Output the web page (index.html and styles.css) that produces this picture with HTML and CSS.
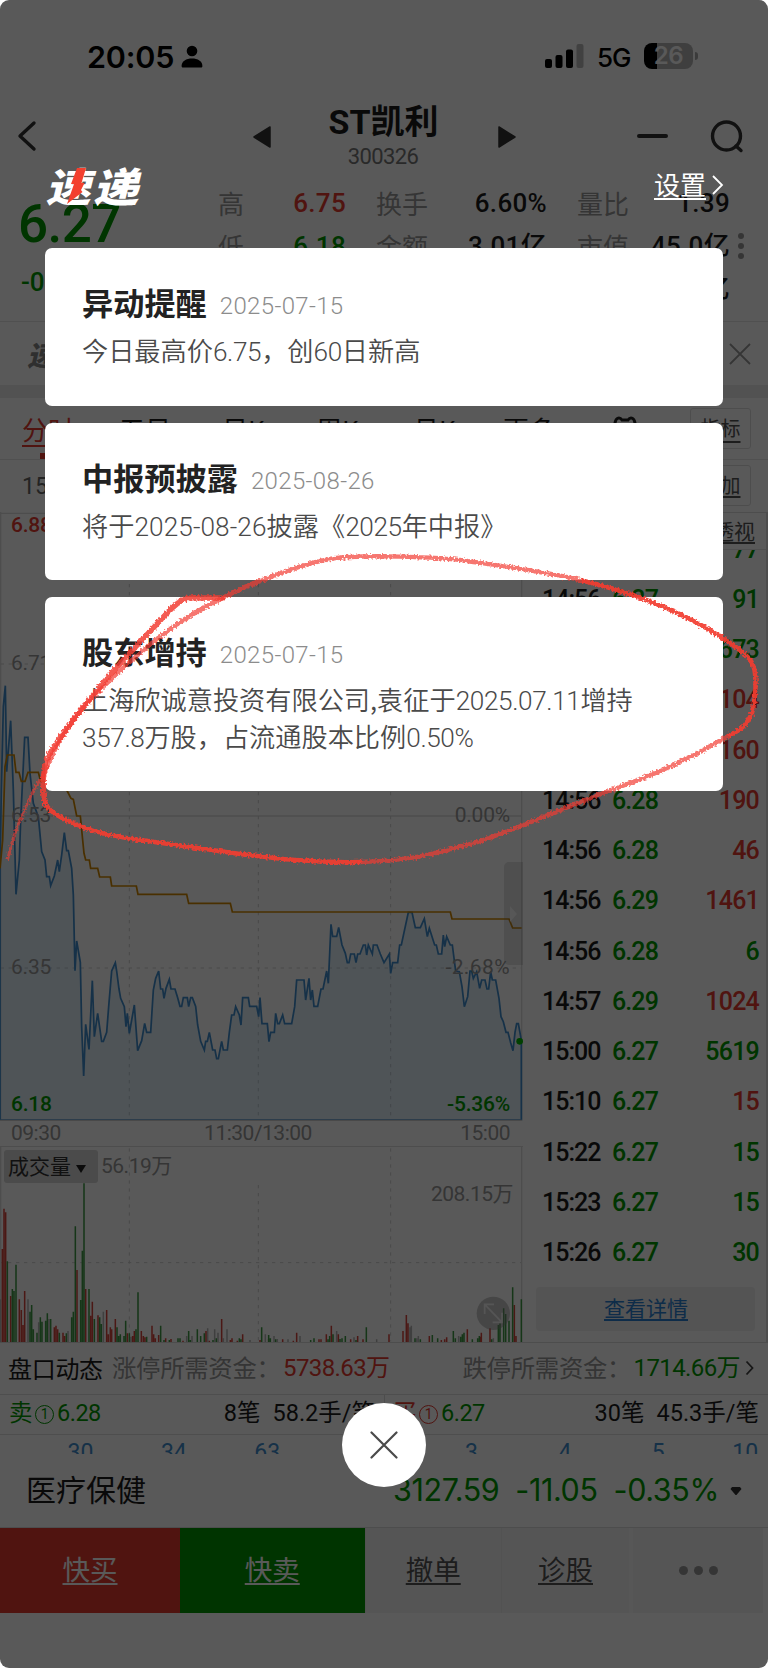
FILE: index.html
```html
<!DOCTYPE html>
<html lang="zh-CN">
<head>
<meta charset="utf-8">
<title>ST凯利 300326</title>
<link rel="stylesheet" href="styles.css">
</head>
<body>
<div class="phone">
  <header class="status">
    <span class="clock">20:05</span>
    <svg class="person" width="22" height="24" viewBox="0 0 22 24"><circle cx="11" cy="6" r="5.3"/><path d="M.6 21c0-5 4.700-7.600 10.400-7.600s10.400 2.600 10.400 7.600c0 1-.5 1.500-1.500 1.500H2.100C1.100 22.500.6 22 .6 21z"/></svg>
    <svg class="signal" width="39" height="25" viewBox="0 0 39 25"><rect x="0" y="15" width="7" height="9" rx="2"/><rect x="10.500" y="11" width="7" height="13" rx="2"/><rect x="21" y="5.500" width="7" height="18.500" rx="2"/><rect x="31.500" y="0" width="7" height="24" rx="2" fill="#bbb"/></svg>
    <span class="net">5G</span>
    <span class="battery"><span class="pct">26</span></span><i class="nub"></i>
  </header>

  <nav class="navbar">
    <svg class="back" width="20" height="32" viewBox="0 0 20 32"><path d="M17 3 3 16l14 13" /></svg>
    <svg class="tri" width="20" height="24" viewBox="0 0 20 24"><path d="M18 2v20L2 12z"/></svg>
    <div class="stock"><h1>ST凯利</h1><span class="num">300326</span></div>
    <svg class="tri" width="20" height="24" viewBox="0 0 20 24"><path d="M2 2v20L18 12z"/></svg>
    <i class="minus"></i>
    <svg class="search" width="34" height="34" viewBox="0 0 34 34"><circle cx="16.500" cy="16" r="14"/><path d="m26 26 5 4.500"/></svg>
  </nav>

  <section class="quote">
    <div class="last"><b class="num">6.27</b><span class="num">-0.07 -1.10%</span></div>
    <div class="stats">
      <span>高</span><b class="num red">6.75</b><span>换手</span><b class="num">6.60%</b><span>量比</span><b class="num">1.39</b>
      <span>低</span><b class="num green">6.18</b><span>金额</span><b class="num">3.01亿</b><span>市值</span><b class="num">45.0亿</b>
      <span>开</span><b class="num red">6.53</b><span>股本</span><b class="num">7.17亿</b><span>流通</span><b class="num">44.9亿</b>
    </div>
    <div class="kebab"><i></i><i></i><i></i></div>
  </section>

  <section class="ticker">
    <span class="logo-small">速递</span>
    <svg width="22" height="22" viewBox="0 0 22 22"><path d="m1 1 20 20M21 1 1 21"/></svg>
  </section>

  <nav class="tabs">
    <a class="active">分时</a><a>五日</a><a>日K</a><a>周K</a><a>月K</a><a>更多</a>
    <svg width="26" height="28" viewBox="0 0 26 28"><path d="M3 8c1-6 5-6 7-3h6c2-3 6-3 7 3v12H3z"/></svg>
    <a class="box">指标</a>
  </nav>
  <div class="legend"><span class="num">15:26 均价</span><a class="box">叠加</a></div>

  <main class="market">
    <div class="charts">
      <div class="minute">
        <svg viewBox="0 -984 1569 1827" width="523" height="609">
          <g class="grid"><path d="M2-980H1563M2 48M2-984V840M1565-984V840" class="solid"/><path d="M2-72H1563" class="solid"/>
            <path d="M2-528H1563M2 384H1563M388-984V840M775-984V840M1172-984V840" class="dash"/></g>
          <path class="area" d="M0 85 4-150 10-400 16-463 20-205 32-358 40-150 48 163 58 60 62-60 74-308H84L90-200 100-110 115-70 125 35 135 60 140 110H148L152 137 163 108 173 60 178 95 185 45 193-22 200 32H205L215 85 220 165 225 392 230 303 241 367 245 560 251 708 257 553 267 628 277 422 283 590 293 520 305 604H310L320 577 326 500 335 393 346 368 350 393 357 447 362 475 373 500 378 560 382 520 388 580 403 495 413 632 425 602 434 550 440 577H452L460 450 467 415 476 393 482 447H488L492 475 498 445 508 418 513 447H525L533 473 540 499H545L550 473H562L566 500 572 473H577L587 499 593 555 602 604 613 630 617 604H622L628 577 638 630H645L650 656H655L665 604 670 630H682L688 577 695 525H702L707 500 718 525 723 555 728 473H745L749 499H770L776 530 780 473 786 551H802L807 605 812 577H823L827 520 833 551H838L848 525 854 551H875L884 500 890 420H912L917 480 927 415 932 480 937 450 942 499H953L963 447H969L980 393 985 430 993 253 998 289H1010L1016 262 1026 315 1036 340 1042 368H1047L1052 342H1063L1068 368 1073 342H1080L1090 315H1096L1100 345 1105 315 1117 342 1120 315H1131L1141 342 1152 368 1168 342 1172 400 1178 368H1193L1199 315H1204L1225 217H1236L1246 263H1261L1273 236 1282 290 1288 265 1304 315H1309L1315 342H1325L1330 285 1334 320 1340 290 1351 315H1357L1367 393 1378 395 1386 440 1393 500 1403 470 1410 393H1415L1420 415 1430 395 1439 445 1445 420H1455L1461 447H1466L1472 395 1477 420H1487L1497 475 1503 530 1510 545 1518 577H1524L1532 608 1539 632 1545 577 1550 551H1555L1564 600V840H0z"/>
          <path class="avg" d="M0 85 8 0 15-220 22-255H42L48-203H57L64-176H75L84-203H115L122-176H185L200-150 213-125 220-122 230-72H241L248 0 252 40 257 60H268L272 85H293L299 111H331L335 138H409L414 163H560L566 190H691L697 216H1351L1356 237H1527L1538 264H1565"/>
          <circle cx="1559" cy="604" r="10" fill="#00b800"/>
          <path d="M0 841.500H1566" class="frame"/>
        </svg>
        <span class="ax num a1 red">6.88</span><span class="ax num a2">6.71</span><span class="ax num a3">6.53</span><span class="ax num a4">6.35</span><span class="ax num a5 green">6.18</span>
        <span class="ax num p1">0.00%</span><span class="ax num p2">-2.68%</span><span class="ax num p3 green">-5.36%</span>
        <div class="handle"></div>
      </div>
      <div class="times num"><span>09:30</span><span>11:30/13:00</span><span>15:00</span></div>
      <div class="volume">
        <svg viewBox="0 81 1569 585" width="523" height="195">
          <path class="dash" d="M0 428H1563M388 85V664M775 195V664M1172 85V664"/>
          <path class="solid" d="M2 81V666M1565 81V666"/>
          <path class="bar gr" d="M1 666V538M84 666V538M116 666V607M147 666V597M204 666V633M310 666V575M393 666V650M560 666V648M576 666V648M623 666V625M644 666V628M654 666V638M681 666V628M670 666V655M796 666V643M822 666V648M832 666V657M864 666V658M900 666V648M1010 666V633M1062 666V652M1130 666V658M750 666V660M1230 666V622M1234 666V617M1250 666V655M1255 666V648M1376 666V648M1480 666V655"/>
          <path class="bar rd" d="M7 666V387M12 666V266M17 666V277M32 666V528M58 666V538M64 666V570M69 666V615M74 666V513M163 666V622M168 666V617M173 666V628M189 666V638M194 666V648M231 666V450M257 666V507M272 666V587M277 666V545M294 666V586M320 666V570M325 666V643M331 666V622M335 666V628M346 666V597M382 666V640M398 666V648M403 666V633M424 666V633M430 666V648M435 666V652M456 666V617M461 666V643M466 666V655M476 666V645M497 666V655M513 666V657M549 666V662M618 666V633M628 666V662M665 666V597M691 666V660M696 666V655M712 666V662M728 666V643M780 666V660M806 666V657M848 666V658M880 666V662M890 666V638M957 666V658M963 666V658M979 666V643M994 666V617M1015 666V643M1052 666V658M1073 666V648M1089 666V658M1167 666V643M1209 666V633M1219 666V585M1224 666V610M1288 666V648M1324 666V660M1334 666V658M1340 666V652M1402 666V628M1440 666V650M1444 666V638M1470 666V625M1543 666V555M1548 666V648"/>
          <path class="bar gn" d="M22 666V424M37 666V507M42 666V513M48 666V434M90 666V575M95 666V555M100 666V628M111 666V638M121 666V592M126 666V605M137 666V602M142 666V580M152 666V597M178 666V638M199 666V640M215 666V592M220 666V575M226 666V319M242 666V540M247 666V392M252 666V190M267 666V507M283 666V597M299 666V592M304 666V612M351 666V622M356 666V648M361 666V643M372 666V648M377 666V602M388 666V640M408 666V628M414 666V517M440 666V650M482 666V617M492 666V660M508 666V660M534 666V655M540 666V655M566 666V633M571 666V660M592 666V628M602 666V648M613 666V640M639 666V660M649 666V655M718 666V655M723 666V658M785 666V622M806 666V645M811 666V655M827 666V658M932 666V660M942 666V655M984 666V658M989 666V648M999 666V643M1020 666V657M1026 666V655M1036 666V648M1068 666V660M1099 666V622M1245 666V655M1261 666V658M1297 666V645M1313 666V655M1360 666V633M1366 666V655M1382 666V650M1387 666V643M1392 666V638M1417 666V658M1433 666V655M1438 666V648M1475 666V658M1495 666V615M1500 666V610M1511 666V565M1517 666V582M1527 666V602M1538 666V502M1564 666V538"/>
          <circle cx="1480" cy="580" r="50" fill="#888" opacity=".45"/>
          <path d="M1454 582V553H1482M1454 553 1506 607M1478 607H1506V578" fill="none" stroke="#f4f4f4" stroke-width="5"/>
        </svg>
        <div class="vollabel"><span>成交量 <i></i></span><em class="num">56.19万</em></div>
        <em class="volmax num">208.15万</em>
      </div>
    </div>
    <aside class="ticks">
      <a class="through">透视</a>
      <ol class="num">
        <li><b>14:56</b><b class="green">6.27</b><b class="green">77</b></li>
        <li><b>14:56</b><b class="green">6.27</b><b class="green">91</b></li>
        <li><b>14:56</b><b class="green">6.28</b><b class="green">673</b></li>
        <li><b>14:56</b><b class="green">6.28</b><b class="red">104</b></li>
        <li><b>14:56</b><b class="green">6.28</b><b class="red">160</b></li>
        <li><b>14:56</b><b class="green">6.28</b><b class="red">190</b></li>
        <li><b>14:56</b><b class="green">6.28</b><b class="red">46</b></li>
        <li><b>14:56</b><b class="green">6.29</b><b class="red">1461</b></li>
        <li><b>14:56</b><b class="green">6.28</b><b class="green">6</b></li>
        <li><b>14:57</b><b class="green">6.29</b><b class="red">1024</b></li>
        <li><b>15:00</b><b class="green">6.27</b><b class="green">5619</b></li>
        <li><b>15:10</b><b class="green">6.27</b><b class="red">15</b></li>
        <li><b>15:22</b><b class="green">6.27</b><b class="green">15</b></li>
        <li><b>15:23</b><b class="green">6.27</b><b class="green">15</b></li>
        <li><b>15:26</b><b class="green">6.27</b><b class="green">30</b></li>
      </ol>
      <a class="detail">查看详情</a>
    </aside>
  </main>

  <section class="orderflow">
    <span class="of-name">盘口动态</span><span class="of-label">涨停所需资金：</span><span class="num red of-up">5738.63万</span>
    <span class="of-label of-right">跌停所需资金：</span><span class="num green">1714.66万</span>
    <svg width="9" height="16" viewBox="0 0 9 16"><path d="m1.500 1.500 6 6.500-6 6.500"/></svg>
  </section>
  <section class="book num">
    <div><span class="green">卖<i class="one">1</i>6.28</span><span>8笔</span><span class="per">58.2手/笔</span></div>
    <div><span class="green"><em class="red">买<i class="one">1</i></em>6.27</span><span>30笔</span><span class="per">45.3手/笔</span></div>
  </section>
  <section class="queue num">
    <span>30</span><span>34</span><span>63</span><span>12</span><span>3</span><span>4</span><span>5</span><span>10</span>
  </section>
  <section class="sector">
    <span class="sector-name">医疗保健</span><div class="idx green"><span>3127.59</span><span>-11.05</span><span>-0.35%</span></div>
    <svg width="12" height="10" viewBox="0 0 12 10"><path d="M2 1h8l1.500 2L6.500 9h-1L.5 3z"/></svg>
  </section>
  <footer class="actions">
    <a class="buy">快买</a><a class="sell">快卖</a><a>撤单</a><a>诊股</a><a class="more"><i></i><i></i><i></i></a>
  </footer>

  <div class="mask">
    <div class="mask-head">
      <div class="logo"><span>速递</span><svg width="20" height="38" viewBox="0 0 20 38"><path d="M11 1h9l-4.500 15h3L15 23l1.500 2L1 37 8 17H5z"/></svg></div>
      <a class="settings"><u>设置</u><svg width="13" height="22" viewBox="0 0 13 22"><path d="m2 2 9 9-9 9"/></svg></a>
    </div>
    <article class="card"><h2>异动提醒<time class="num">2025-07-15</time></h2><p>今日最高价<s>6.75</s>，创<s>60</s>日新高</p></article>
    <article class="card"><h2>中报预披露<time class="num">2025-08-26</time></h2><p>将于<s class="d">2025-08-26</s>披露《<s>2025</s>年中报》</p></article>
    <article class="card tall"><h2>股东增持<time class="num">2025-07-15</time></h2><p>上海欣诚意投资有限公司,袁征于<s>2025.07.11</s>增持<br><s>357.8</s>万股，占流通股本比例<s>0.50%</s></p></article>
    <button class="close" aria-label="关闭"><svg width="28" height="28" viewBox="0 0 28 28"><path d="m1.500 1.500 25 25M26.500 1.500l-25 25"/></svg></button>
  </div>

  <svg class="ink" width="768" height="1669" viewBox="0 0 768 1669">
    <filter id="crayon" x="0" y="500" width="768" height="400" filterUnits="userSpaceOnUse">
      <feTurbulence type="fractalNoise" baseFrequency=".5" numOctaves="2" seed="4" result="n"/>
      <feDisplacementMap in="SourceGraphic" in2="n" scale="6" xChannelSelector="R" yChannelSelector="G"/>
    </filter>
    <g filter="url(#crayon)">
      <path class="thin" d="M8 858C13 838 16 828 21 818S32 788 43 777"/>
      <path class="soft" d="M43 777C55 744 72 718 100 690S148 645 173 627 245 586 260 581 300 564 330 559 440 557 467 561 550 572 584 581"/>
      <path d="M584 581C625 591 665 605 701 625 730 642 750 655 753 665 757 675 756 698 752 713 746 726 741 730 730 735"/>
      <path class="soft" d="M730 735C700 753 660 773 617 788S500 837 467 845 420 860 360 862"/>
      <path d="M360 862C310 863 270 858 233 853S160 843 133 839 97 832 83 827 50 814 45 803"/>
      <path class="soft wide" d="M45 803C42 785 42 770 50 753 66 728 80 710 100 687 115 668 150 632 167 613 182 598 185 597 200 598L222 598"/>
    </g>
  </svg>
</div>
</body>
</html>
```

FILE: styles.css
```css
* { box-sizing: border-box; }
body { margin: 0; background: #fff; font-family: "Noto Sans CJK SC", sans-serif; }
h1, h2, p, ol { margin: 0; padding: 0; font-weight: 400; }
i, em { font-style: normal; }
s { text-decoration: none; }
a { text-decoration: underline; text-underline-offset: 4px; text-decoration-thickness: 2px; }
.num { font-family: Roboto, "Noto Sans CJK SC", sans-serif; }
.red { color: #e5392f; }
.green { color: #009900; }
.phone { position: relative; width: 768px; height: 1668px; display: flex; flex-direction: column; background: #fff; color: #1c1c1c; border-radius: 9px; overflow: hidden; line-height: 1; }
.phone > * { flex: none; }

.status { height: 90px; display: flex; align-items: center; padding: 25px 0 0 87px; color: #000; font-family: Inter, sans-serif; }
.clock { font-size: 30.500px; font-weight: 600; letter-spacing: -.2px; width: 94px; }
.person { margin-top: -1px; }
.signal { margin: -3px 13px 0 342px; }
.net { font-size: 26px; font-weight: 500; letter-spacing: -1px; width: 47px; }
.battery { width: 49px; height: 26px; margin-top: -3px; border-radius: 8px; background: linear-gradient(90deg, #000 13px, #b4b4b4 13px); display: flex; justify-content: center; align-items: center; }
.pct { font-size: 24px; font-weight: 600; color: #fff; letter-spacing: -.5px; }
.nub { width: 3px; height: 8px; margin: -3px 0 0 2px; border-radius: 0 3px 3px 0; background: #aaa; }

.navbar { height: 90px; display: flex; align-items: center; padding-left: 17px; }
.navbar svg { fill: #333; }
.navbar .back { fill: none; stroke: #333; stroke-width: 3.4; stroke-linecap: round; stroke-linejoin: round; margin-top: 2px; }
.navbar .tri { stroke: #333; stroke-width: 1.500; stroke-linejoin: round; margin-top: 3px; }
.back + .tri { margin-left: 215px; }
.stock { width: 225px; display: flex; flex-direction: column; align-items: center; }
.stock h1 { font: 700 34px/40px Roboto, "Noto Sans CJK SC", sans-serif; transform: translate(-1px, 3px); }
.stock .num { font-size: 22px; line-height: 30px; color: #777; letter-spacing: -.6px; margin: 3px 3px 0 0; }
.minus { width: 31px; height: 4px; border-radius: 2px; background: #333; margin: 2px 0 0 120px; }
.navbar .search { fill: none; stroke: #333; stroke-width: 3.4; stroke-linecap: round; margin: 4px 0 0 42px; }

.quote { height: 142px; display: flex; padding-left: 18px; border-bottom: 1px solid #e4e4e4; }
.last { width: 200px; color: #009900; }
.last b { display: block; font-size: 53px; font-weight: 500; letter-spacing: -.6px; line-height: 88px; }
.last span { display: block; font-size: 26px; font-weight: 500; line-height: 28px; padding-left: 3px; white-space: nowrap; }
.stats { width: 512px; display: grid; grid-template-columns: 50px 78px 83px 118px 86px 97px; grid-auto-rows: 43px; align-items: center; padding-top: 1px; font-size: 26px; }
.stats span { color: #999; }
.stats span:nth-child(6n + 3), .stats span:nth-child(6n + 5) { padding-left: 30px; white-space: nowrap; }
.stats b { font-weight: 500; letter-spacing: .3px; text-align: right; }
.kebab { padding-top: 53px; margin-left: 8px; display: flex; flex-direction: column; gap: 4px; }
.kebab i { width: 6px; height: 6px; border-radius: 50%; background: #999; }

.ticker { height: 76px; padding: 0 17px 0 30px; display: flex; justify-content: space-between; align-items: center; border-bottom: 13px solid #ececec; }
.ticker svg { stroke: #999; stroke-width: 1.800; }
.logo-small { font-size: 28px; font-weight: 900; color: #888; transform: skewX(-13deg); }

.tabs { height: 62px; display: grid; grid-template-columns: 97px 103px 94px 97px 90px 109px 78px 60px; align-items: center; padding-left: 22px; font-size: 26px; border-bottom: 1px solid #e4e4e4; }
.tabs a { text-underline-offset: 5px; }
.tabs a:not(.active):not(.box) { text-decoration: none; }
.active { color: #e5392f; background: linear-gradient(#e5392f, #e5392f) 18px 100% / 16px 6px no-repeat; height: 61px; line-height: 61px; }
.tabs svg { fill: none; stroke: #222; stroke-width: 3; }
.box { width: 61px; height: 41px; border: 1px solid #ddd; border-radius: 3px; font-size: 20px; line-height: 38px; text-align: center; color: #555; text-underline-offset: 3px; }
.legend { height: 52px; display: flex; align-items: center; justify-content: space-between; padding: 0 17px 0 22px; font-size: 23px; color: #666; }
.legend .box { margin-top: -2px; }

.market { height: 831px; display: flex; border-bottom: 1px solid #ddd; }
.charts { width: 523px; }
.charts svg { display: block; }
.minute { position: relative; height: 609px; }
.solid { fill: none; stroke: #ddd; stroke-width: 4; }
.frame { stroke: #d0d0d0; stroke-width: 4; }
.dash { fill: none; stroke: #d0d0d0; stroke-width: 3; stroke-dasharray: 10 14; }
.area { fill: rgba(125, 180, 225, .22); stroke: #3f8ece; stroke-width: 5.200; }
.avg { fill: none; stroke: #d28800; stroke-width: 5.200; }
.ax { position: absolute; left: 11px; font-size: 21px; font-weight: 400; color: #999; line-height: 24px; letter-spacing: -.2px; }
.ax.red { color: #e5392f; }
.ax.green { color: #009900; }
.a1 { top: 1px; font-weight: 500; } .a2 { top: 139px; } .a3 { top: 291px; } .a4 { top: 443px; } .a5 { top: 580px; font-weight: 500; }
.p1, .p2, .p3 { left: auto; right: 13px; }
.p1 { top: 291px; } .p2 { top: 443px; letter-spacing: .4px; } .p3 { top: 580px; font-weight: 500; }
.handle { position: absolute; right: 0; top: 350px; width: 19px; height: 103px; background: rgba(120, 120, 120, .22); border-radius: 5px 0 0 5px; }
.handle::after { content: ""; position: absolute; left: 6px; top: 44px; border: 8px solid transparent; border-left: 7px solid #fff; border-right: 0; opacity: .8; }
.times { height: 26px; display: flex; justify-content: space-between; align-items: center; padding: 0 13px 0 11px; font-size: 21px; color: #999; border-bottom: 1px solid #ddd; letter-spacing: -.5px; }
.times span:nth-child(2) { margin-left: -5px; }
.volume { position: relative; height: 195px; }
.bar { fill: none; stroke-width: 4.600; }
.bar.rd { stroke: #d8463e; } .bar.gn { stroke: #3f9a45; } .bar.gr { stroke: #b5b5b5; }
.vollabel { position: absolute; left: 4px; top: 3px; display: flex; align-items: center; font-size: 21px; }
.vollabel span { width: 94px; height: 33px; background: #d6d6d6; border-radius: 3px; line-height: 31px; padding-left: 4px; color: #333; }
.vollabel span i { display: inline-block; border: 5px solid transparent; border-top: 8px solid #222; border-bottom: 0; vertical-align: 1px; }
.vollabel em { margin-left: 3px; color: #999; letter-spacing: -.5px; }
.volmax { position: absolute; right: 10px; top: 37px; font-size: 21px; color: #999; letter-spacing: -.5px; }

.ticks { width: 245px; border-right: 2px solid #ddd; border-top: 1px solid #ddd; padding-top: 7px; }
.through { display: block; text-align: right; padding-right: 11px; height: 30px; font-size: 21px; line-height: 20px; color: #555; text-underline-offset: 3px; border-bottom: 1px solid #e4e4e4; }
.ticks ol { list-style: none; height: 725px; overflow: hidden; }
.ticks ol li:first-child { margin-top: -26px; }
.ticks li { height: 50.250px; display: grid; grid-template-columns: 70px 60px 87px; align-items: center; padding-left: 19px; font-size: 25px; }
.ticks b { font-weight: 500; letter-spacing: -.9px; }
.ticks b:first-child { letter-spacing: -1px; }
.ticks b:last-child { text-align: right; letter-spacing: -.8px; }
.detail { display: block; width: 219px; height: 44px; margin: 12px 0 0 13px; background: #efefef; border-radius: 4px; text-align: center; font-size: 21px; line-height: 40px; color: #2a7fd0; text-underline-offset: 3px; padding-left: 1px; }

.orderflow { height: 52px; display: flex; align-items: center; padding: 0 14px 2px 8px; font-size: 24px; white-space: nowrap; border-bottom: 1px solid #e0e0e0; letter-spacing: -.3px; }
.orderflow .num { letter-spacing: -.6px; }
.of-name { width: 104px; }
.of-label { color: #999; width: 171px; font-size: 24.400px; }
.of-right { margin-left: auto; }
.orderflow svg { fill: none; stroke: #444; stroke-width: 1.800; margin-left: 5px; }
.book { height: 40px; display: flex; font-size: 23.500px; border-bottom: 1px solid #e0e0e0; }
.book div { width: 384px; display: flex; align-items: center; padding: 0 9px 2px; white-space: nowrap; }
.book div + div { border-left: 1px solid #ddd; padding-left: 8px; }
.book div > span:first-child { margin-right: auto; display: flex; align-items: center; letter-spacing: -.5px; }
.book em { display: flex; align-items: center; }
.one { width: 19px; height: 19px; margin: 1px 3px 0; border: 1.500px solid; border-radius: 50%; font-size: 14px; line-height: 16px; text-align: center; }
.per { margin-left: 12px; }
.queue { height: 19px; display: grid; grid-template-columns: repeat(8, 93.400px); overflow: hidden; font-size: 23px; color: #3f8ece; text-align: right; padding-top: 6px; }
.queue span:nth-child(n + 5) { transform: translateX(11px); }
.sector { height: 74px; display: flex; align-items: center; padding: 0 26px 0 26px; font-size: 30px; border-bottom: 1px solid #ddd; }
.sector-name { margin-top: -6px; }
.idx { margin-left: auto; font-family: Inter, sans-serif; font-size: 30.500px; display: flex; gap: 16px; letter-spacing: -.4px; margin-top: -1px; }
.sector svg { fill: #333; margin-left: 11px; }
.actions { height: 85px; display: grid; grid-template-columns: 180px 184.500px 136.500px 128px 134px; font-size: 27.500px; text-align: center; line-height: 81px; color: #555; }
.actions a { background: #f4f4f4; border-left: 1px solid #ececec; text-underline-offset: 3px; }
.actions a.buy, .actions a.sell { color: #fff; border: 0; }
.actions .buy { background: #e5392f; }
.actions .sell { background: #009600; }
.actions .more { border-left: 4px solid #fafafa; display: flex; align-items: center; justify-content: center; gap: 6px; }
.more i { width: 9px; height: 9px; border-radius: 50%; background: #999; }

.mask { position: absolute; inset: 0; padding: 0 45px; background: rgba(0, 0, 0, .65); display: flex; flex-direction: column; }
.mask > * { flex: none; }
.mask-head { height: 248px; padding-top: 166px; display: flex; justify-content: space-between; align-items: flex-start; color: #fff; }
.logo { position: relative; width: 97px; height: 40px; }
.logo span { display: block; width: 84px; font-size: 40px; line-height: 40px; font-weight: 900; letter-spacing: 2px; white-space: nowrap; transform-origin: 0 100%; transform: translate(0, -1px) skewX(-14deg) scaleX(1.130); }
.logo svg { position: absolute; left: 21px; top: 1px; fill: #f3402f; }
.settings { display: flex; align-items: center; margin-top: 2px; font-size: 26px; line-height: 32px; text-decoration: none; }
.settings u { text-underline-offset: 3px; text-decoration-thickness: 2px; }
.settings svg { fill: none; stroke: #fff; stroke-width: 1.800; margin: 2px -1px 0 5px; }
.card { width: 678px; height: 157.500px; padding: 35px 37px 0; margin-bottom: 17px; border-radius: 7px; background: #fff; color: #4a4a4a; }
.card.tall { height: 194px; }
.card h2 { display: flex; align-items: center; height: 38px; font-size: 31.200px; font-weight: 700; line-height: 38px; color: #222; }
.card time { padding-top: 8px; margin-left: 13px; font-size: 24px; font-weight: 300; line-height: 34px; letter-spacing: .35px; color: #8c8c8c; }
.card p { margin-top: 11px; font-size: 26.200px; line-height: 37px; white-space: nowrap; font-weight: 350; }
.card s { font-family: Roboto, sans-serif; line-height: 1; letter-spacing: -.4px; }
.card s.d { letter-spacing: .1px; }
.close { position: absolute; left: 342px; top: 1403px; width: 84px; height: 84px; border: 0; border-radius: 50%; background: #fff; display: flex; align-items: center; justify-content: center; padding: 0 1px 0 0; }
.close svg { stroke: #4a4a4a; stroke-width: 2.200; stroke-linecap: round; }
.ink { position: absolute; left: 0; top: 0; pointer-events: none; }
.ink path { fill: none; stroke: #f23c32; stroke-width: 4.500; stroke-linecap: round; opacity: .92; }
.ink .soft { opacity: .7; }
.ink .wide { stroke-width: 5.500; opacity: .85; }
.ink .thin { stroke-width: 3; opacity: .6; }
```
